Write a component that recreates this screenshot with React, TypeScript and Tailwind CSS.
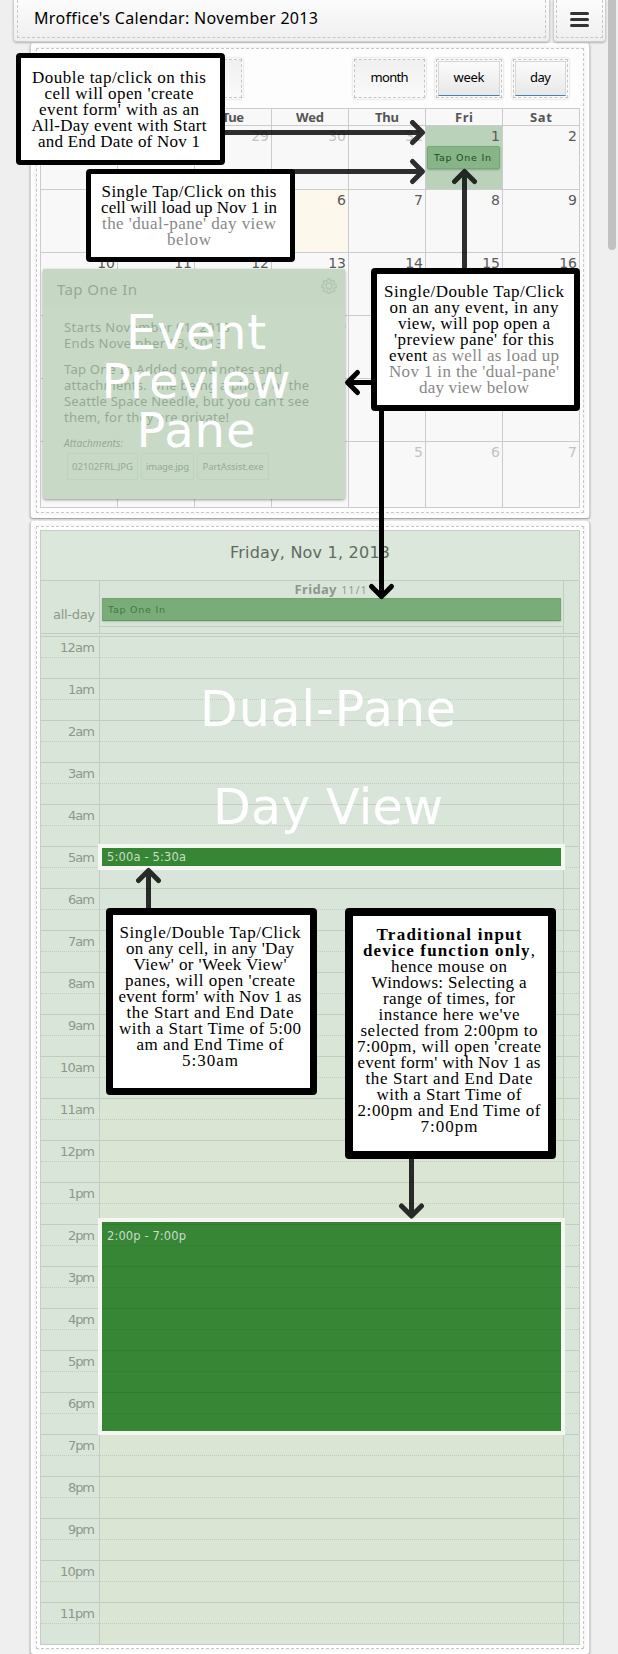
import { useLayoutEffect, useRef, useState } from "react";
import type { ReactNode } from "react";

/* Single line of text tracked out (or in) to an exact width. */
function Fit({ w, children, className = "" }: { w: number; children: ReactNode; className?: string }) {
  const ref = useRef<HTMLSpanElement>(null);
  const [spacing, setSpacing] = useState(0);
  useLayoutEffect(() => {
    const el = ref.current;
    if (!el) return;
    const n = (el.textContent ?? "").length;
    if (n > 1) setSpacing((w - el.getBoundingClientRect().width) / (n - 1));
  }, [w]);
  return (
    <span
      ref={ref}
      className={`inline-block whitespace-nowrap ${className}`}
      style={{ letterSpacing: spacing, marginRight: -spacing }}
    >
      {children}
    </span>
  );
}

const SANS = "font-['Noto_Sans',sans-serif]";
const VERD = "font-['DejaVu_Sans',sans-serif]";

function Header() {
  return (
    <header className="ml-[13px] flex h-[42px] gap-[3px]">
      <div className="w-[537px] rounded-b-[4px] border border-t-0 border-[#cfcfcf] bg-gradient-to-b from-[#fcfcfc] to-[#efefef] px-[3px] pb-[3px] shadow-[0_1px_2px_rgba(0,0,0,0.25)]">
        <div className={`h-[38px] border border-t-0 border-dashed border-[#c8c8c8] pl-[16px] pt-[6px] text-[16px] leading-[24px] text-black ${SANS}`}>
          <Fit w={284}>Mroffice's Calendar: November 2013</Fit>
        </div>
      </div>
      <div className="w-[53px] rounded-b-[4px] border border-t-0 border-[#cfcfcf] bg-gradient-to-b from-[#fcfcfc] to-[#efefef] px-[2px] pb-[3px] shadow-[0_1px_2px_rgba(0,0,0,0.25)]">
        <div className="flex h-[38px] flex-col items-center gap-[3px] border border-t-0 border-dashed border-[#c8c8c8] pt-[12px]">
          <i className="block h-[3px] w-[19px] rounded-full bg-[#333]" />
          <i className="block h-[3px] w-[19px] rounded-full bg-[#333]" />
          <i className="block h-[3px] w-[19px] rounded-full bg-[#333]" />
        </div>
      </div>
    </header>
  );
}

function ToolButton({ label, w, tw, active = false }: { label: string; w: string; tw: number; active?: boolean }) {
  return (
    <div className={`h-[41px] rounded-[3px] bg-[#fafafa] p-px shadow-[0_0_2px_rgba(0,0,0,0.25)] ${w}`}>
      <div className={`h-full border border-dashed border-[#c4c4c4] ${active ? "p-px" : ""}`}>
        <div
          className={`flex h-full items-center justify-center bg-gradient-to-b pb-px text-[13px] text-black ${SANS} ${
            active
              ? "border border-b-[1px] border-[#d6d6d6] border-b-[#4a81aa] from-[#fbfbfb] to-[#e8e8e8]"
              : "from-[#f0f0f0] to-[#fafafa]"
          }`}
        >
          <Fit w={tw}>{label}</Fit>
        </div>
      </div>
    </div>
  );
}

const DAYS: [string, number][] = [["Sun", 24], ["Mon", 27], ["Tue", 22], ["Wed", 28], ["Thu", 24], ["Fri", 18], ["Sat", 22]];
const WEEKS = [
  [27, 28, 29, 30, 31, 1, 2],
  [3, 4, 5, 6, 7, 8, 9],
  [10, 11, 12, 13, 14, 15, 16],
  [17, 18, 19, 20, 21, 22, 23],
  [24, 25, 26, 27, 28, 29, 30],
  [1, 2, 3, 4, 5, 6, 7],
];

function MonthPanel() {
  return (
    <section className="ml-[30px] mt-px h-[475px] w-[560px] rounded-[3px] border-x border-[#cfcfcf] bg-white px-[5px] py-[5px] shadow-[0_1px_2px_rgba(0,0,0,0.4)]">
      <div className="h-[465px] border border-dashed border-[#c8c8c8] bg-[#fdfdfd] px-[3px] pt-[9px] shadow-[0_0_4px_rgba(0,0,0,0.1)]">
        <div className="flex h-[50px] justify-end gap-[9px] pr-[11px]">
          <div className="mr-[101px]">
            <ToolButton label="today" w="w-[71px]" tw={35} />
          </div>
          <ToolButton label="month" w="w-[73px]" tw={38} />
          <ToolButton label="week" w="w-[68px]" tw={31} active />
          <ToolButton label="day" w="w-[57px]" tw={21} active />
        </div>
        <div className="w-[540px] border-b border-r border-[#ccc] bg-[#f8f8f8]">
          <div className="grid h-[17px] grid-cols-7">
            {DAYS.map(([d, w]) => (
              <div key={d} className={`border-l border-t border-[#ccc] text-center text-[13px] font-bold leading-[17px] text-[#555] ${SANS}`}>
                <Fit w={w}>{d}</Fit>
              </div>
            ))}
          </div>
          {WEEKS.map((week, r) => (
            <div key={r} className={`grid grid-cols-7 ${r === 0 ? "h-[64px]" : r === 5 ? "h-[66px]" : "h-[63px]"}`}>
              {week.map((n, c) => {
                const faded = (r === 0 && c < 5) || r === 5;
                const picked = r === 0 && c === 5;
                const today = r === 1 && c === 3;
                return (
                  <div
                    key={c}
                    className={`border-l border-t border-[#ccc] pr-[2px] pt-[2px] text-right text-[14px] leading-[17px] ${VERD} ${
                      picked ? "bg-[#bad2ba] text-[#4a5a4a]" : today ? "bg-[#fcf9ec]" : ""
                    } ${faded ? "text-[#c3c3c3]" : "text-[#5a5a5a]"}`}
                  >
                    {n}
                    {picked && (
                      <div className="ml-px mt-px flex h-[23px] items-center rounded-[2px] border border-[#74a874] bg-[#87b587] pl-[6px] text-[9.5px] leading-none text-[#1e4a1e] shadow-[0_1px_2px_rgba(0,0,0,0.25)]">
                        <Fit w={57}>Tap One In</Fit>
                      </div>
                    )}
                  </div>
                );
              })}
            </div>
          ))}
        </div>
      </div>
    </section>
  );
}

const HOURS = [
  "12am", "1am", "2am", "3am", "4am", "5am", "6am", "7am", "8am", "9am", "10am", "11am",
  "12pm", "1pm", "2pm", "3pm", "4pm", "5pm", "6pm", "7pm", "8pm", "9pm", "10pm", "11pm",
];

function DayPanel() {
  return (
    <section className="ml-[30px] mt-[3px] h-[1133px] w-[560px] rounded-[3px] border-x border-[#cfcfcf] bg-white px-[5px] py-[5px] shadow-[0_1px_2px_rgba(0,0,0,0.4)]">
      <div className="h-[1123px] border border-dashed border-[#c8c8c8] px-[3px] py-[3px] shadow-[0_0_4px_rgba(0,0,0,0.1)]">
        <div className={`w-[540px] border border-[#c6ccc6] bg-[#d9e5d9] ${VERD}`}>
          <div className="h-[49px] bg-[#dae7da] pt-[11px] text-center text-[16px] leading-[22px] text-[#606a60]">
            <Fit w={160}>Friday, Nov 1, 2013</Fit>
          </div>
          <div className="flex h-[54px] border-b border-t border-[#c2cdc2] text-[#8c988c]">
            <div className="w-[58px] pr-[4px] pt-[26px] text-right text-[13px] leading-[16px]">
              <Fit w={42}>all-day</Fit>
            </div>
            <div className="w-[465px] border-x border-[#c2cdc2]">
              <div className="h-[46px] border-b border-[#c2cdc2]">
                <div className={`flex h-[17px] items-baseline justify-center gap-[5px] pr-[2px] leading-[17px] ${SANS}`}>
                  <Fit w={42} className="text-[13px] font-bold">Friday</Fit>
                  <Fit w={25} className="text-[10px]">11/1</Fit>
                </div>
                <div className="ml-[2px] flex h-[23px] w-[459px] items-center rounded-[1px] border border-[#6fa56f] border-b-[#5f9a5f] bg-[#7aac79] pl-[5px] text-[9.5px] leading-none text-[#3f7a40] shadow-[0_1px_2px_rgba(0,0,0,0.15)]">
                  <Fit w={57}>Tap One In</Fit>
                </div>
              </div>
            </div>
          </div>
          <div className="flex flex-col pt-[2px]">
            {HOURS.map((h, i) => (
              <div key={h} className="flex h-[42px] border-t border-[#c2cdc2]">
                <div className="w-[58px] text-right text-[13px] leading-[17px] text-[#8c988c]">
                  <div className="h-[21px] border-b border-dotted border-[#c2cdc2] pr-[4px] pt-[2px]">
                    <Fit w={h.length === 4 ? 35 : 27}>{h}</Fit>
                  </div>
                </div>
                <div
                  className={`w-[465px] border-x border-[#c2cdc2] ${
                    i < 8 ? "" : i === 8 ? "bg-[#d9e5d8]" : i === 9 ? "bg-[#d9e5d7]" : i === 10 ? "bg-[#d9e5d5]" : "bg-[#dae5d3]"
                  }`}
                >
                  <div className="h-[21px] border-b border-dotted border-[#c2cdc2]" />
                </div>
                <div className="flex-1">
                  <div className="h-[21px] border-b border-dotted border-[#c2cdc2]" />
                </div>
              </div>
            ))}
          </div>
        </div>
      </div>
    </section>
  );
}

function TimeBlock({ label, place, lines = 0 }: { label: string; place: string; lines?: number }) {
  return (
    <div className={`absolute left-[98px] w-[467px] border-4 border-[#f5f8f2] bg-[#378636] ${VERD} ${place}`}>
      {lines > 0 && (
        <div className="flex flex-col pt-[2px]">
          {Array.from({ length: lines }, (_, i) => (
            <div key={i} className="h-[42px] border-t border-[#327c31] pt-[20px]">
              <div className="border-t border-dotted border-[#327c31]" />
            </div>
          ))}
        </div>
      )}
      <div className={`absolute left-[5px] text-[11.5px] leading-[14px] text-[#c9dcc9] ${lines ? "top-[7px]" : "top-[2px]"}`}>
        <Fit w={79}>{label}</Fit>
      </div>
    </div>
  );
}

function Gear() {
  return (
    <svg width="16" height="16" viewBox="0 0 16 16" fill="none" stroke="#b0c5af" strokeLinejoin="round">
      <path
        strokeWidth="1.3"
        d="M6.9 1h2.2l.4 1.9 1.3.5 1.6-1 1.5 1.5-1 1.7.5 1.2 2 .4v2l-2 .4-.5 1.3 1 1.6-1.5 1.6-1.6-1.1-1.3.5-.4 2H6.9l-.4-2-1.3-.5-1.6 1.1-1.5-1.6 1-1.6-.5-1.3-2-.4v-2l2-.4.5-1.2-1-1.7 1.5-1.5 1.6 1 1.3-.5z"
      />
      <circle cx="8" cy="8" r="3" strokeWidth="1.3" />
    </svg>
  );
}

function FileChip({ name, w, tw }: { name: string; w: string; tw: number }) {
  return (
    <div className={`flex h-[27px] items-center justify-center rounded-[2px] border border-[#bfd4bf] text-[9.5px] ${w}`}>
      <Fit w={tw}>{name}</Fit>
    </div>
  );
}

function PreviewPane() {
  return (
    <div className={`absolute left-[43px] top-[269px] h-[230px] w-[302px] rounded-[3px] bg-[#c8dac6] text-[#94aa94] shadow-[0_1px_3px_rgba(0,0,0,0.4)] ${SANS}`}>
      <div className="flex h-[38px] items-start justify-between bg-[#c6d8c4] pl-[14px] pr-[8px] pt-[9px]">
        <Fit w={80} className="text-[15px] leading-[22px]">Tap One In</Fit>
        <Gear />
      </div>
      <div className="flex flex-col items-start pl-[21px] pt-[12px] text-[13px] leading-[16px]">
        <Fit w={166}>Starts November 01, 2013</Fit>
        <Fit w={159}>Ends November 03, 2013</Fit>
        <Fit w={218} className="mt-[10px]">Tap One In Added some notes and</Fit>
        <Fit w={245}>attachments. One being a photo of the</Fit>
        <Fit w={245}>Seattle Space Needle, but you can't see</Fit>
        <Fit w={165}>them, for they are private!</Fit>
        <Fit w={59} className="mt-[10px] text-[10px] italic">Attachments:</Fit>
        <div className="ml-[3px] mt-[2px] flex gap-[3px]">
          <FileChip name="02102FRL.JPG" w="w-[71px]" tw={61} />
          <FileChip name="image.jpg" w="w-[53px]" tw={43} />
          <FileChip name="PartAssist.exe" w="w-[72px]" tw={61} />
        </div>
      </div>
      <div className={`absolute left-0 top-[39px] flex w-full flex-col items-center pl-[4px] text-[48px] leading-[49px] text-white ${VERD}`}>
        <Fit w={140}>Event</Fit>
        <Fit w={189}>Preview</Fit>
        <Fit w={119}>Pane</Fit>
      </div>
    </div>
  );
}

function Note({ place, lines }: { place: string; lines: [ReactNode, number][] }) {
  return (
    <div className={`absolute flex flex-col items-center rounded-[4px] border-black bg-white font-['Liberation_Serif',serif] text-[17px] leading-[16px] text-black ${place}`}>
      {lines.map(([t, w], i) => (
        <Fit key={i} w={w}>{t}</Fit>
      ))}
    </div>
  );
}

const gray = (t: string) => <span className="text-[#888]">{t}</span>;

function Arrows() {
  return (
    <svg className="absolute left-0 top-0" width="618" height="1654" fill="none" strokeWidth="5" strokeLinejoin="round">
      <g stroke="#000" opacity="0.81">
        <path d="M210 132.5H422" />
        <path d="M412.5 122.5L422.5 132.5L412.5 142.5" strokeLinecap="round" />
        <path d="M209 171.5H422" />
        <path d="M412.5 161.5L422.5 171.5L412.5 181.5" strokeLinecap="round" />
        <path d="M464.5 275V172" />
        <path d="M454.5 181.5L464.5 171.5L474.5 181.5" strokeLinecap="round" />
        <path d="M148.5 912V871" />
        <path d="M138.5 880.5L148.5 870.5L158.5 880.5" strokeLinecap="round" />
        <path d="M411.5 1155V1216" />
        <path d="M401.5 1206L411.5 1216L421.5 1206" strokeLinecap="round" />
      </g>
      <g stroke="#000">
        <path d="M375 382.5H348" />
        <path d="M357.5 372.5L347.5 382.5L357.5 392.5" strokeLinecap="round" />
        <path d="M381.5 405V596" />
        <path d="M371.5 586.5L381.5 596.5L391.5 586.5" strokeLinecap="round" />
      </g>
    </svg>
  );
}

export default function App() {
  return (
    <main className="relative h-[1654px] w-[618px] overflow-hidden bg-[#efefef]">
      <Header />
      <MonthPanel />
      <DayPanel />

      <TimeBlock label="5:00a - 5:30a" place="top-[844px] h-[26px]" />
      <TimeBlock label="2:00p - 7:00p" place="top-[1218px] h-[217px] overflow-hidden" lines={5} />
      <PreviewPane />
      <div className={`absolute left-[200px] top-[681px] text-[49px] leading-[58px] text-white ${VERD}`}>
        <Fit w={256}>Dual-Pane</Fit>
      </div>
      <div className={`absolute left-[213px] top-[779px] text-[49px] leading-[58px] text-white ${VERD}`}>
        <Fit w={230}>Day View</Fit>
      </div>

      <Arrows />

      <Note
        place="left-[16px] top-[53px] h-[112px] w-[209px] border-[5px] pt-[12px] pr-[3px]"
        lines={[
          ["Double tap/click on this", 174],
          ["cell will open 'create", 149],
          ["event form' with as an", 160],
          ["All-Day event with Start", 175],
          ["and End Date of Nov 1", 162],
        ]}
      />
      <Note
        place="left-[86px] top-[169px] h-[93px] w-[209px] border-[5px] pt-[10px] pr-[3px]"
        lines={[
          ["Single Tap/Click on this", 175],
          ["cell will load up Nov 1 in", 176],
          [gray("the 'dual-pane' day view"), 174],
          [gray("below"), 44],
        ]}
      />
      <Note
        place="left-[371px] top-[268px] h-[143px] w-[209px] border-[6px] pt-[10px] pr-[3px]"
        lines={[
          ["Single/Double Tap/Click", 180],
          ["on an any event, in any", 169],
          ["view, will pop open a", 152],
          ["'preview pane' for this", 160],
          [<>event {gray("as well as load up")}</>, 170],
          [gray("Nov 1 in the 'dual-pane'"), 170],
          [gray("day view below"), 110],
        ]}
      />
      <Note
        place="left-[106px] top-[908px] h-[187px] w-[211px] border-[7px] pt-[10px] pr-[3px]"
        lines={[
          ["Single/Double Tap/Click", 181],
          ["on any cell, in any 'Day", 168],
          ["View' or 'Week View'", 153],
          ["panes, will open 'create", 170],
          ["event form' with Nov 1 as", 183],
          ["the Start and End Date", 167],
          ["with a Start Time of 5:00", 182],
          ["am and End Time of", 147],
          ["5:30am", 56],
        ]}
      />
      <Note
        place="left-[345px] top-[908px] h-[251px] w-[211px] border-[8px] pt-[11px] pr-[3px]"
        lines={[
          [<b>Traditional input</b>, 145],
          [<><b>device function only</b>,</>, 172],
          ["hence mouse on", 116],
          ["Windows: Selecting a", 155],
          ["range of times, for", 132],
          ["instance here we've", 141],
          ["selected from 2:00pm to", 177],
          ["7:00pm, will open 'create", 184],
          ["event form' with Nov 1 as", 183],
          ["the Start and End Date", 167],
          ["with a Start Time of", 145],
          ["2:00pm and End Time of", 183],
          ["7:00pm", 57],
        ]}
      />

      <div className="absolute left-[608px] top-0 h-[250px] w-[8px] rounded-b-full bg-[#c1c1c1]" />
    </main>
  );
}
